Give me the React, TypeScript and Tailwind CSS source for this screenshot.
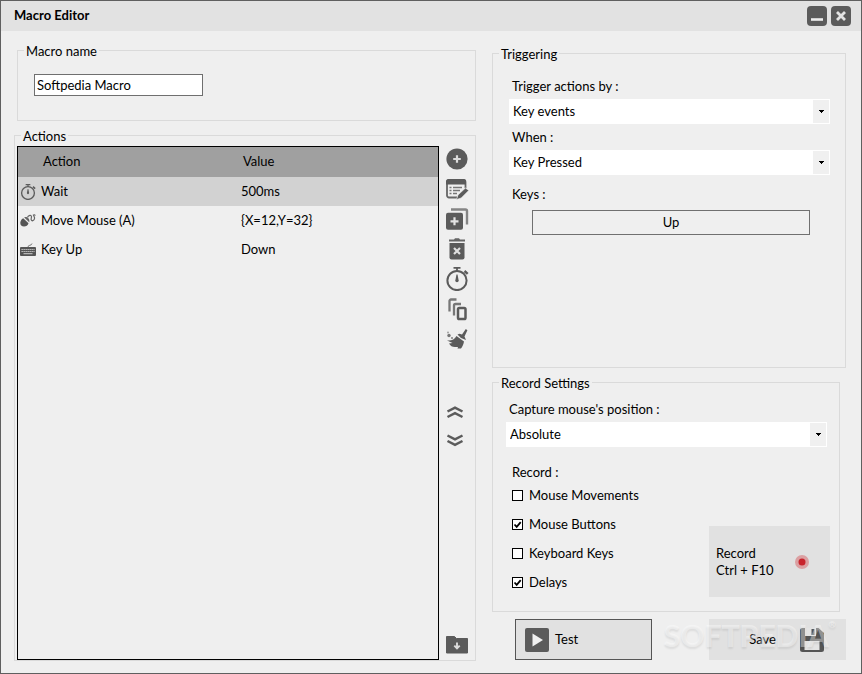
import React from "react";

type IconProps = { className?: string };
type IconType = (props: IconProps) => React.ReactElement;

const PlusCircle: IconType = ({ className }) => (
  <svg viewBox="0 0 24 24" className={className} aria-hidden="true">
    <circle cx="12" cy="12" r="10.6" fill="#5b5b5b" />
    <path d="M12 8.200v7.600M8.200 12h7.600" stroke="#dcdcdc" strokeWidth="2.200" />
  </svg>
);

const EditList: IconType = ({ className }) => (
  <svg viewBox="0 0 24 24" className={className} aria-hidden="true">
    <path d="M12 20.500H4a2 2 0 0 1-2-2V5a2 2 0 0 1 2-2h14.500a2 2 0 0 1 2 2v6" fill="none" stroke="#666" strokeWidth="1.800" />
    <path d="M1 7.500V4.500A2.500 2.500 0 0 1 3.500 2h15A2.500 2.500 0 0 1 21 4.500v3z" fill="#5b5b5b" />
    <path d="M4.500 10.500h2M4.500 13.500h2M4.500 16.500h2M8 10.500h9M8 13.500h7M8 16.500h4" stroke="#777" strokeWidth="1.500" />
    <path d="M11.500 22.500l1.500-4.500 7.500-7 3.200 2.500-7.500 7.500z" fill="#5b5b5b" stroke="#efefef" strokeWidth=".6" />
  </svg>
);

const Duplicate: IconType = ({ className }) => (
  <svg viewBox="0 0 24 24" className={className} aria-hidden="true">
    <path d="M6 2.500h14.500a1.500 1.500 0 0 1 1.500 1.500v13.500" fill="none" stroke="#858585" strokeWidth="2.400" />
    <rect x="1" y="5.800" width="17" height="17" rx="2" fill="#5b5b5b" />
    <path d="M9.500 10.300v8M5.500 14.300h8" stroke="#e4e4e4" strokeWidth="2.200" />
  </svg>
);

const Trash: IconType = ({ className }) => (
  <svg viewBox="0 0 24 24" className={className} aria-hidden="true">
    <path d="M4 2.500h5l1-1.300h4l1 1.300h5v2H4z" fill="#666" />
    <path d="M4.500 6h15v14.500a2 2 0 0 1-2 2h-11a2 2 0 0 1-2-2z" fill="#5b5b5b" />
    <path d="M9 11l6 6M15 11l-6 6" stroke="#e0e0e0" strokeWidth="2.200" />
  </svg>
);

const Stopwatch: IconType = ({ className }) => (
  <svg viewBox="0 0 24 24" className={className} aria-hidden="true">
    <circle cx="12" cy="13.500" r="9.600" fill="none" stroke="#5b5b5b" strokeWidth="2" />
    <path d="M8.500 .8h7M12 1v3" stroke="#5b5b5b" strokeWidth="1.800" />
    <path d="M19.500 4l3.200 2.800" stroke="#5b5b5b" strokeWidth="2.400" />
    <path d="M11.500 7.500h1l1.200 6a1.700 1.700 0 1 1-3.400 0z" fill="#5b5b5b" />
  </svg>
);

const Stack: IconType = ({ className }) => (
  <svg viewBox="0 0 24 24" className={className} aria-hidden="true">
    <path d="M4.500 14.500V4A1.500 1.500 0 0 1 6 2.500h5.500M9 18.500v-10A1.500 1.500 0 0 1 10.500 7H16" fill="none" stroke="#777" strokeWidth="2.300" />
    <rect x="13" y="11" width="7.500" height="11" rx="1.300" fill="none" stroke="#5b5b5b" strokeWidth="2.500" />
  </svg>
);

const Broom: IconType = ({ className }) => (
  <svg viewBox="0 0 24 24" className={className} aria-hidden="true">
    <path d="M20.800 2l1.600 1.200-2.900 6.300 1.500 3.500-5-2-3.500-3.500 2-.7 2.500.7z" fill="#5b5b5b" />
    <path d="M11.500 9l7.500 5.500c-.5 2.700-1.500 5-3 7h-3.500l.5-1.500-2.500 0c-3 .2-5-1-6.500-3.500l3.500-.5L2 13.500c4.500.5 7.500-1 9.500-4.500z" fill="#5b5b5b" />
    <circle cx="4" cy="8.500" r="1.700" fill="#777" />
    <circle cx="7" cy="11" r="1.100" fill="#888" />
    <circle cx="3" cy="5.500" r=".9" fill="#999" />
  </svg>
);

const DoubleUp: IconType = ({ className }) => (
  <svg viewBox="0 0 24 24" className={className} aria-hidden="true">
    <path d="M2.500 10.500l7.500-3.800 7.500 3.800M2.500 16l7.500-3.800 7.500 3.800" fill="none" stroke="#5b5b5b" strokeWidth="2.500" />
  </svg>
);

const DoubleDown: IconType = ({ className }) => (
  <svg viewBox="0 0 24 24" className={className} aria-hidden="true">
    <path d="M2.500 6.500l7.500 3.800 7.500-3.800M2.500 12l7.500 3.800 7.500-3.800" fill="none" stroke="#5b5b5b" strokeWidth="2.500" />
  </svg>
);

const FolderDown: IconType = ({ className }) => (
  <svg viewBox="0 0 24 24" className={className} aria-hidden="true">
    <path d="M1.500 3.500h8l2 2h11v14.500h-21z" fill="#5b5b5b" stroke="#5b5b5b" strokeLinejoin="round" />
    <path d="M12 9.500v5M9.300 12.700L12 15.500l2.700-2.800" fill="none" stroke="#dcdcdc" strokeWidth="1.900" />
  </svg>
);

const MouseIcon: IconType = ({ className }) => (
  <svg viewBox="0 0 16 16" className={className} aria-hidden="true">
    <path d="M.3 9.500C.6 7.500 1.500 6 3.200 5.200l5.300 5c-.7 2.400-2.300 3.300-4.500 3.300S0 12 .3 9.500z" fill="#555" />
    <path d="M4.200 4.500c2.600-1.500 6 1.200 5 4.800z" fill="#666" />
    <path d="M7.500 4.500c.5-1.800 2.800-2.800 3.800-1.500s-1.200 3 .2 4.300 3.500-.8 3-2.800c-.3-1-.5-2-1.500-2.300M13 2.200c1-.8 2-.5 2.300.5" fill="none" stroke="#666" strokeWidth="1.200" />
  </svg>
);

const KeyboardIcon: IconType = ({ className }) => (
  <svg viewBox="0 0 16 16" className={className} aria-hidden="true">
    <rect x="0" y="5" width="16" height="9" rx="1" fill="#555" />
    <path d="M1.500 7.500h13M1.500 9.500h13" stroke="#ccc" strokeWidth="1" strokeDasharray="1.300 .7" />
    <path d="M3.500 11.700h9" stroke="#ccc" strokeWidth="1" />
    <path d="M8 5c0-2.500 3.500-.8 4-3.500" fill="none" stroke="#777" />
  </svg>
);

const tools: { label: string; Icon: IconType }[] = [
  { label: "Add action", Icon: PlusCircle },
  { label: "Edit action", Icon: EditList },
  { label: "Duplicate action", Icon: Duplicate },
  { label: "Delete action", Icon: Trash },
  { label: "Add delay", Icon: Stopwatch },
  { label: "Copy actions", Icon: Stack },
  { label: "Clear actions", Icon: Broom },
];

const actions: { name: string; value: string; Icon: IconType }[] = [
  { name: "Wait", value: "500ms", Icon: Stopwatch },
  { name: "Move Mouse (A)", value: "{X=12,Y=32}", Icon: MouseIcon },
  { name: "Key Up", value: "Down", Icon: KeyboardIcon },
];

const recordOptions = [
  { id: "movements", label: "Mouse Movements", checked: false },
  { id: "buttons", label: "Mouse Buttons", checked: true },
  { id: "keyboard", label: "Keyboard Keys", checked: false },
  { id: "delays", label: "Delays", checked: true },
];

function ToolButton({ label, Icon }: { label: string; Icon: IconType }) {
  return (
    <button type="button" aria-label={label} className="size-6 shrink-0">
      <Icon className="size-6" />
    </button>
  );
}

function Group({ title, className, children }: { title: string; className: string; children: React.ReactNode }) {
  return (
    <fieldset className={`min-w-0 border border-[#dadada] ${className}`}>
      <legend className="mb-[2px] ml-[6px] px-[2px] pt-[2px] leading-4">{title}</legend>
      {children}
    </fieldset>
  );
}

function Dropdown({ id, label, options }: { id: string; label: string; options: string[] }) {
  return (
    <div>
      <label htmlFor={id} className="ml-[3px] block leading-[18px]">
        {label}
      </label>
      <div className="relative mt-1">
        <select id={id} className="block h-[25px] w-full appearance-none bg-white pl-1 outline-none">
          {options.map((o) => (
            <option key={o}>{o}</option>
          ))}
        </select>
        <span className="pointer-events-none absolute inset-y-px right-px flex w-4 items-center justify-center bg-[#f0f0f0]">
          <svg viewBox="0 0 5 3" className="h-[3px] w-[5px]" aria-hidden="true">
            <path d="M0 0h5v1H4v1H3v1H2V2H1V1H0z" fill="#000" />
          </svg>
        </span>
      </div>
    </div>
  );
}

function Checkbox({ id, label, checked }: { id: string; label: string; checked: boolean }) {
  return (
    <div className="flex h-[29px] items-center">
      <span className="relative size-[11px]">
        <input
          id={id}
          type="checkbox"
          defaultChecked={checked}
          className="peer block size-[11px] appearance-none border border-black bg-white"
        />
        <svg viewBox="0 0 11 11" className="pointer-events-none absolute inset-0 hidden size-[11px] peer-checked:block" aria-hidden="true">
          <path d="M2.500 5.500L4.700 7.800 8.700 3.200" fill="none" stroke="#000" strokeWidth="1.800" />
        </svg>
      </span>
      <label htmlFor={id} className="pl-[6px]">
        {label}
      </label>
    </div>
  );
}

export default function App() {
  return (
    <div className="flex min-h-screen w-full flex-col border border-[#5f5f5f] bg-[#efefef] font-[Lato,sans-serif] text-[13px] text-black">
      <header className="flex h-[30px] shrink-0 items-center justify-between bg-[#e2e2e2] pr-[10px] pl-[13px]">
        <h1 className="font-bold">Macro Editor</h1>
        <div className="flex gap-1">
          <button type="button" aria-label="Minimize" className="size-5 rounded-[4px] bg-[#5b5b5b]">
            <svg viewBox="0 0 20 20" className="size-5" aria-hidden="true">
              <path d="M4 13.500h12" stroke="#efefef" strokeWidth="2.600" />
            </svg>
          </button>
          <button type="button" aria-label="Close" className="size-5 rounded-[4px] bg-[#5b5b5b]">
            <svg viewBox="0 0 20 20" className="size-5" aria-hidden="true">
              <path d="M6 6l8 8M14 6l-8 8" stroke="#e4e4e4" strokeWidth="2.800" />
            </svg>
          </button>
        </div>
      </header>

      <main className="flex flex-1 gap-4 pt-[10px] pr-[15px] pb-3 pl-[13px]">
        <div className="flex min-w-0 flex-1 flex-col gap-[5px]">
          <Group title="Macro name" className="ml-[3px] h-20 shrink-0">
            <input
              type="text"
              aria-label="Macro name"
              defaultValue="Softpedia Macro"
              className="mt-[13px] ml-4 block h-[22px] w-[169px] border border-[#6f6f6f] bg-white px-[2px] outline-none"
            />
          </Group>

          <Group title="Actions" className="flex flex-1 flex-col">
            <div className="flex flex-1 pl-[2px]">
              <div className="flex-1 border border-black">
                <table className="w-full table-fixed text-left">
                  <thead className="bg-[#a0a0a0]">
                    <tr className="h-[30px]">
                      <th className="w-[200px] pl-[25px] font-normal">Action</th>
                      <th className="pl-[25px] font-normal">Value</th>
                    </tr>
                  </thead>
                  <tbody>
                    {actions.map(({ name, value, Icon }) => (
                      <tr key={name} className="h-[29px] first:bg-[#d2d2d2]">
                        <td className="pl-[2px]">
                          <span className="flex items-center gap-[5px]">
                            <Icon className="size-4" />
                            {name}
                          </span>
                        </td>
                        <td className="pl-[23px]">{value}</td>
                      </tr>
                    ))}
                  </tbody>
                </table>
              </div>
              <div className="flex w-9 shrink-0 flex-col items-start gap-[6px] pt-px pb-[3px] pl-[6px]">
                {tools.map((t) => (
                  <ToolButton key={t.label} {...t} />
                ))}
                <div className="mt-11 flex flex-col gap-1">
                  <ToolButton label="Move up" Icon={DoubleUp} />
                  <ToolButton label="Move down" Icon={DoubleDown} />
                </div>
                <div className="mt-auto h-6">
                  <ToolButton label="Import actions" Icon={FolderDown} />
                </div>
              </div>
            </div>
          </Group>
        </div>

        <div className="flex w-[354px] shrink-0 flex-col pt-[3px] pb-px">
          <Group title="Triggering" className="flex-1">
            <div className="pr-[15px] pl-4">
              <div className="flex flex-col gap-1 pt-[13px]">
                <Dropdown id="trigger" label="Trigger actions by :" options={["Key events", "Mouse events"]} />
                <Dropdown id="when" label="When :" options={["Key Pressed", "Key Released"]} />
              </div>
              <p className="mt-[10px] ml-[3px] leading-[18px]">Keys :</p>
              <div className="mt-[7px] pr-5 pl-[23px]">
                <button type="button" className="block h-[25px] w-full border border-[#707070] bg-[#efefef]">
                  Up
                </button>
              </div>
            </div>
          </Group>

          <Group title="Record Settings" className="mt-[5px] mr-[6px] pb-[14px]">
            <div className="pt-[7px] pr-3 pl-[13px]">
              <Dropdown id="capture" label="Capture mouse's position :" options={["Absolute", "Relative"]} />
            </div>
            <div className="mt-4 flex items-end justify-between pr-[9px] pl-[19px]">
              <div>
                <p className="leading-[18px]">Record :</p>
                {recordOptions.map((o) => (
                  <Checkbox key={o.id} {...o} />
                ))}
              </div>
              <button type="button" className="flex h-[71px] w-[121px] items-center justify-between bg-[#e1e1e1] pr-5 pl-[7px] text-left leading-[17px]">
                <span>
                  Record
                  <br />
                  Ctrl + F10
                </span>
                <svg viewBox="0 0 16 16" className="size-4" aria-hidden="true">
                  <circle cx="8" cy="8" r="7" fill="#dba0a2" />
                  <circle cx="8" cy="8" r="3.500" fill="#c8232b" />
                </svg>
              </button>
            </div>
          </Group>

          <div className="relative mt-[7px] flex justify-between pl-[23px]">
            <button type="button" className="flex h-[41px] w-[137px] items-center gap-[6px] border border-[#555] bg-[#e1e1e1] pl-[9px]">
              <svg viewBox="0 0 24 24" className="size-6" aria-hidden="true">
                <rect width="24" height="24" rx="2" fill="#5b5b5b" />
                <path d="M7.500 5.500v13L18 12z" fill="#efefef" />
              </svg>
              Test
            </button>
            <button type="button" className="flex h-[41px] w-[137px] items-center justify-end gap-6 bg-[#e1e1e1] pr-[22px]">
              Save
              <svg viewBox="0 0 24 24" className="size-6" aria-hidden="true">
                <path d="M2.500 0h16L24 5v16.500a2.500 2.500 0 0 1-2.500 2.500h-19A2.500 2.500 0 0 1 0 21.500v-19A2.500 2.500 0 0 1 2.500 0z" fill="#555" />
                <path d="M5 0h11v8H5zM4.500 13h15v9h-15z" fill="#e4e4e4" />
                <path d="M11.500 1h3v6h-3z" fill="#555" />
              </svg>
            </button>
            <span
              aria-hidden="true"
              className="pointer-events-none absolute top-0 right-[10px] flex items-start text-[30px] leading-8 font-black text-white/40 [text-shadow:0_2px_2px_rgb(0_0_0/0.08)]"
            >
              SOFTPEDIA<span className="text-[9px] leading-3">®</span>
            </span>
          </div>
        </div>
      </main>
    </div>
  );
}
